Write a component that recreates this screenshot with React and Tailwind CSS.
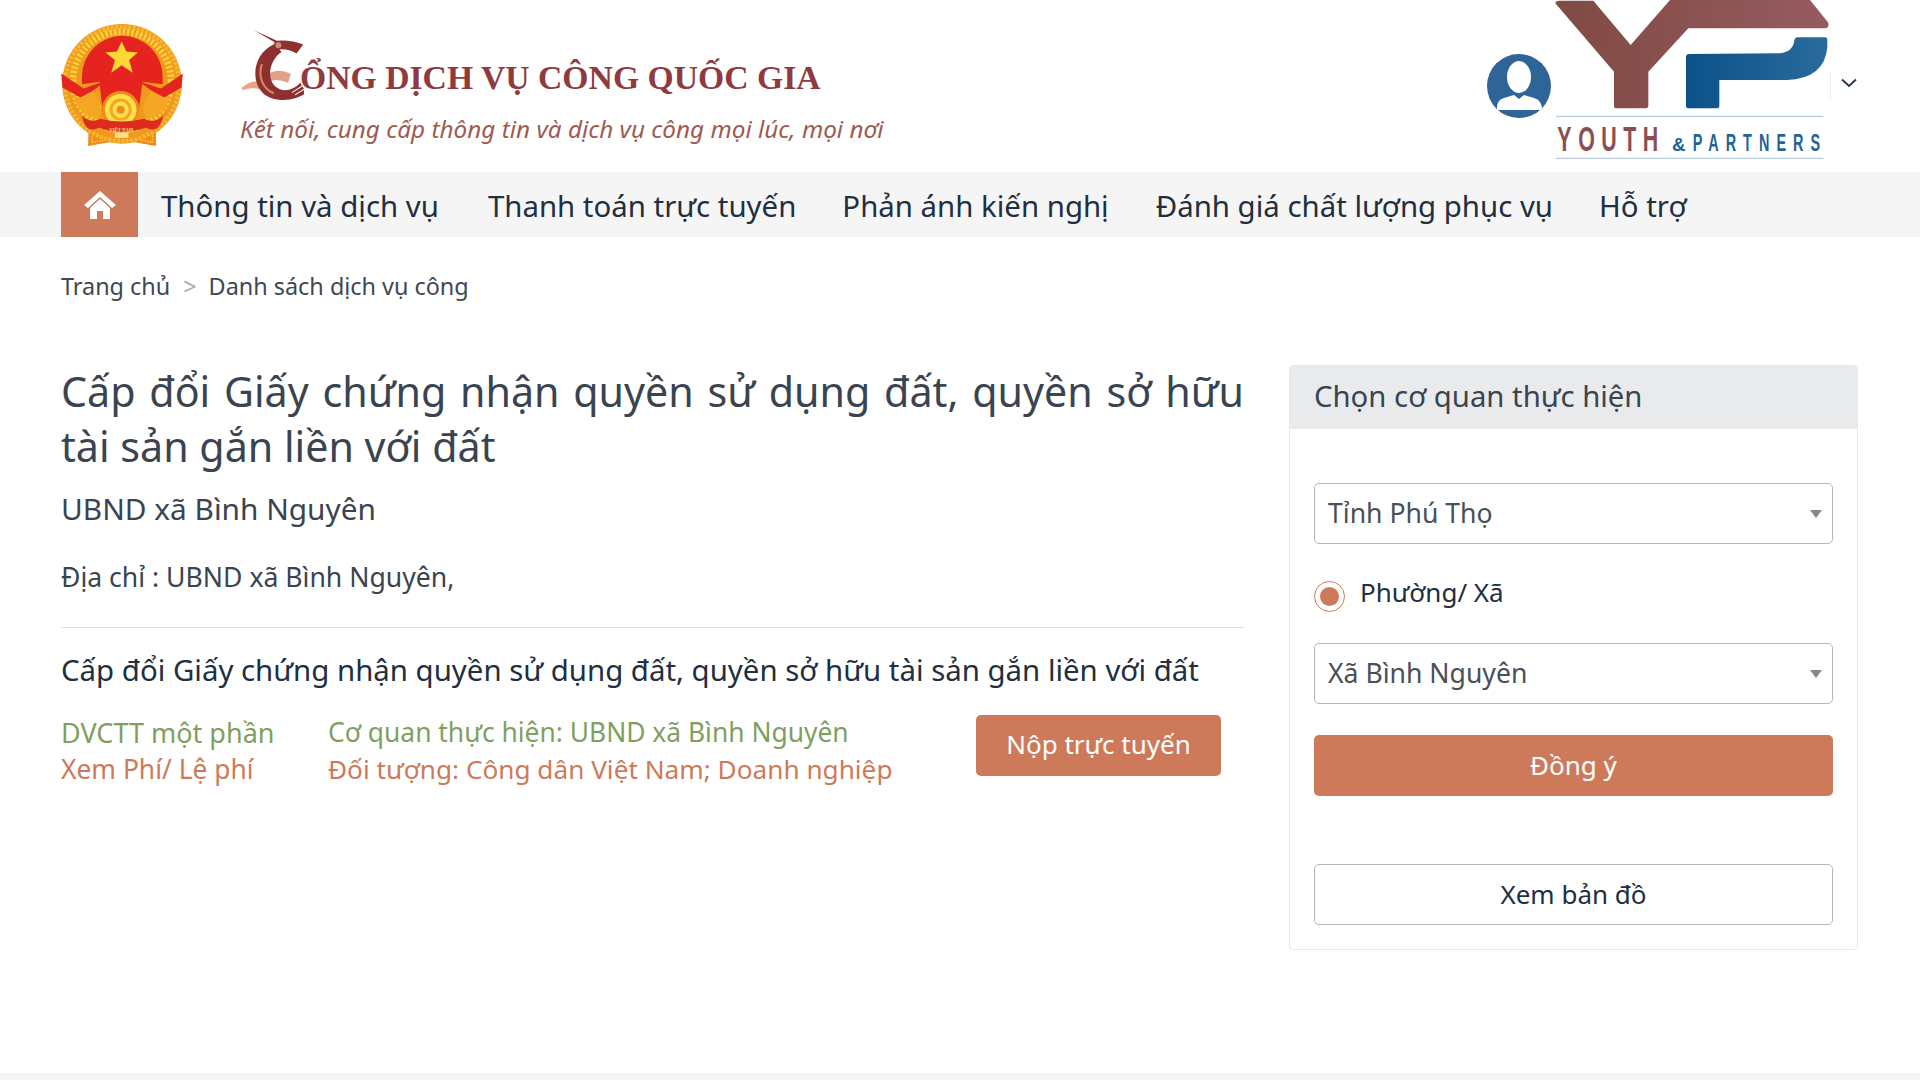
const Emblem = () => (
    <svg viewBox="68 40 362 372" className="w-[122px] h-[125px]">
        <path d="M150 345 L350 345 L350 406 L250 388 L148 406 Z" fill="#f08a1d" />
        <path d="M160 355 L340 355 L340 395 L250 380 L160 395 Z" fill="none" stroke="#ffd23c" strokeWidth="5" strokeDasharray="4 4" />
        <circle cx="249" cy="221" r="178" fill="#ef9a1e" />
        <circle cx="249" cy="221" r="170" fill="none" stroke="#f7b733" strokeWidth="12" strokeDasharray="8 5" />
        <circle cx="249" cy="212" r="146" fill="none" stroke="#ffd23c" strokeWidth="20" strokeDasharray="7 6" />
        <path d="M130 200 A120 122 0 0 1 370 200 L370 222 L310 215 L300 290 L190 290 L182 215 L130 222 Z" fill="#e5231f" />
        <polygon points="248,95 262,125 296,128 270,150 281,188 248,166 217,188 228,150 200,128 234,125" fill="#fdd835" />
        <path d="M68 190 L135 235 L200 212 L165 240 L125 262 L72 232 Z" fill="#e5231f" />
        <path d="M430 190 L365 235 L295 212 L335 240 L375 262 L426 232 Z" fill="#e5231f" />
        <path d="M105 262 L125 262 Q155 250 165 240 L190 290 L180 325 Q125 320 105 262 Z" fill="#f5a623" />
        <path d="M393 262 L375 262 Q345 250 335 240 L310 290 L320 325 Q375 320 393 262 Z" fill="#f5a623" />
        <circle cx="245" cy="298" r="56" fill="#f08a1d" />
        <circle cx="245" cy="298" r="47" fill="#ffe14d" />
        <circle cx="245" cy="298" r="33" fill="#f5a623" />
        <circle cx="245" cy="298" r="24" fill="#ffe14d" />
        <circle cx="245" cy="298" r="12" fill="#f08a1d" />
        <path d="M130 315 Q155 340 185 325 Q245 342 315 325 Q345 340 372 315 Q360 372 320 352 Q245 375 180 352 Q140 372 130 315 Z" fill="#df2a1f" />
        <text x="247" y="361" textAnchor="middle" fontFamily="Liberation Serif, serif" fontSize="14" fontWeight="700" fill="#fbe089">VIỆT NAM</text>
        <rect x="228" y="366" width="40" height="16" fill="#fbe089" />
    </svg>
);

const BirdLogo = () => (
    <svg viewBox="30 25 170 190" className="w-[64px] h-[72px]">
        <path d="M34 184 Q60 158 100 168 L98 192 Q62 178 38 190 Z" fill="#e8a58a" />
        <path d="M98 150 Q130 128 165 146 L158 170 Q125 155 100 170 Z" fill="#e0a08a" />
        <path d="M124 66 C55 92 55 192 112 210 C150 222 185 212 206 196 L190 170 C170 192 142 196 124 180 C100 158 108 110 140 88 Z" fill="#8f3030" />
        <path d="M88 120 C78 150 88 185 120 198" fill="none" stroke="#d77f5f" strokeWidth="6" />
        <path d="M66 30 L128 58 Q165 55 198 68 L180 92 Q155 78 130 82 L118 72 L122 62 Z" fill="#8f3030" />
        <circle cx="132" cy="70" r="8" fill="#c98b74" />
        <path d="M160 186 L186 170 M168 196 L196 178 M176 202 L202 186" stroke="#f5f5f5" strokeWidth="3" />
    </svg>
);

const YpLogo = () => (
    <svg viewBox="345 0 825 480" className="w-[275px] h-[160px]">
        <defs>
            <linearGradient id="ypBrown">
                <stop offset="0" stopColor="#7f4a43" />
                <stop offset="1" stopColor="#965b61" />
            </linearGradient>
            <linearGradient id="ypBlue">
                <stop offset="0" stopColor="#0b5189" />
                <stop offset="1" stopColor="#2a6b9c" />
            </linearGradient>
        </defs>
        <path d="M346 10 Q347 2 358 2 L460 2 L572 135 L690 0 L1110 0 L1165 68 Q1168 85 1155 85 L745 85 L625 215 L625 318 Q624 325 615 325 L530 325 Q522 325 522 318 L522 215 Z" fill="url(#ypBrown)" />
        <path d="M738 172 Q738 162 748 162 L1020 160 Q1060 155 1063 120 Q1065 112 1072 112 L1155 112 Q1162 112 1162 120 L1162 140 Q1155 235 1040 240 L838 240 L838 318 Q838 325 830 325 L745 325 Q738 325 738 318 Z" fill="url(#ypBlue)" />
        <line x1="348" y1="349" x2="1150" y2="349" stroke="#a9c0d4" strokeWidth="3" />
        <line x1="348" y1="475" x2="1150" y2="475" stroke="#a9c0d4" strokeWidth="3" />
        <text transform="translate(352 452) scale(0.6 1)" fontFamily="Liberation Sans, sans-serif" fontWeight="700" fontSize="107" textLength="505" lengthAdjust="spacing" fill="#8a4f52">YOUTH</text>
        <text x="696" y="452" fontFamily="Liberation Sans, sans-serif" fontWeight="700" fontSize="56" fill="#1f6398">&amp;</text>
        <text transform="translate(758 452) scale(0.6 1)" fontFamily="Liberation Sans, sans-serif" fontWeight="700" fontSize="72" textLength="637" lengthAdjust="spacing" fill="#1f6398">PARTNERS</text>
    </svg>
);

const Avatar = () => (
    <svg viewBox="0 0 64 64" className="w-[64px] h-[64px]">
        <circle cx="32" cy="32" r="32" fill="#2f6499" />
        <ellipse cx="32" cy="23" rx="12" ry="16" fill="#fff" />
        <path d="M10 56 Q9 46 17 44 L27 41 L32 45 L37 41 L47 44 Q55 46 55 56 Z" fill="#fff" />
    </svg>
);

const SelectBox = ({ value }) => (
    <div className="h-[61px] border border-[#b5b5b5] rounded-[5px] flex items-center justify-between pl-[13px] pr-[10px] text-[26.6px] text-[#495057]">
        <span>{value}</span>
        <span className="w-0 h-0 border-x-[6px] border-x-transparent border-t-[8px] border-t-[#888]"></span>
    </div>
);

const menu = [
    { label: 'Thông tin và dịch vụ', gap: 'mr-[49px]' },
    { label: 'Thanh toán trực tuyến', gap: 'mr-[46px]' },
    { label: 'Phản ánh kiến nghị', gap: 'mr-[47px]' },
    { label: 'Đánh giá chất lượng phục vụ', gap: 'mr-[46px]' },
    { label: 'Hỗ trợ', gap: '' },
];

export default function App() {
    return (
        <div className="w-[1920px] h-[1080px] bg-white flex flex-col overflow-hidden font-['Noto_Sans',sans-serif] text-[#212f3f]">
            <header className="h-[172px] flex items-start pl-[61px] pr-[63px]">
                <div className="mt-[23px]"><Emblem /></div>
                <div className="ml-[57px] mt-[28px]">
                    <div className="flex items-end">
                        <BirdLogo />
                        <span className="font-['Liberation_Serif',serif] font-bold text-[33.7px] leading-[40px] text-[#8f3a3f] ml-[-4px] mb-[2px]">ỔNG DỊCH VỤ CÔNG QUỐC GIA</span>
                    </div>
                    <div className="italic text-[24.3px] leading-[30px] text-[#a05a4f] mt-[14px]">Kết nối, cung cấp thông tin và dịch vụ công mọi lúc, mọi nơi</div>
                </div>
                <div className="ml-auto flex items-start">
                    <div className="mt-[54px] mr-[4px]"><Avatar /></div>
                    <YpLogo />
                    <div className="mt-[72px] h-[28px] border-l border-[#eee] pl-[10px] pt-[6px]">
                        <svg viewBox="0 0 16 10" className="w-[16px] h-[10px]">
                            <path d="M1 1.5 L8 8 L15 1.5" fill="none" stroke="#2f3b48" strokeWidth="2" />
                        </svg>
                    </div>
                </div>
            </header>

            <nav className="h-[65px] bg-[#f5f5f5] flex items-center pl-[61px]">
                <div className="w-[77px] h-[65px] bg-[#cd7a5a] flex items-center justify-center mr-[23px]">
                    <svg viewBox="0 0 32 28" className="w-[32px] h-[28px]">
                        <path d="M16 0 L32 14 L28 17 L16 6 L4 17 L0 14 Z" fill="#fff" />
                        <path d="M6 17 L16 8 L26 17 L26 28 L19 28 L19 20 L13 20 L13 28 L6 28 Z" fill="#fff" />
                    </svg>
                </div>
                {menu.map((item) => (
                    <span key={item.label} className={`text-[29.4px] pt-[3px] whitespace-nowrap ${item.gap}`}>{item.label}</span>
                ))}
            </nav>

            <div className="flex items-center pl-[61px] mt-[33px] text-[23.4px] leading-[32px] text-[#3d4853]">
                <span>Trang chủ</span>
                <span className="ml-[13px] mr-[12px] text-[#aaa]">&gt;</span>
                <span>Danh sách dịch vụ công</span>
            </div>

            <main className="flex-1 flex items-start pl-[61px] pr-[62px] mt-[63px]">
                <div className="w-[1183px]">
                    <h1 className="text-[41.2px] leading-[55px] text-[#3a4450] text-justify -mt-[1px]">Cấp đổi Giấy chứng nhận quyền sử dụng đất, quyền sở hữu tài sản gắn liền với đất</h1>
                    <div className="text-[29.8px] leading-[40px] text-[#3a4450] mt-[15px]">UBND xã Bình Nguyên</div>
                    <div className="text-[26.6px] leading-[34px] text-[#3a4450] mt-[31px]">Địa chỉ : UBND xã Bình Nguyên,</div>
                    <div className="border-t border-[#dfdfdf] mt-[33px]"></div>
                    <div className="text-[29.4px] leading-[40px] mt-[22px]">Cấp đổi Giấy chứng nhận quyền sử dụng đất, quyền sở hữu tài sản gắn liền với đất</div>
                    <div className="flex items-start mt-[25px] leading-[37px]">
                        <div className="w-[267px] -mt-[1px]">
                            <div className="text-[27px] text-[#7f9f5f]">DVCTT một phần</div>
                            <div className="text-[26.4px] text-[#cd7a5a]">Xem Phí/ Lệ phí</div>
                        </div>
                        <div className="w-[648px] -mt-[1px]">
                            <div className="text-[26.4px] text-[#7f9f5f]">Cơ quan thực hiện: UBND xã Bình Nguyên</div>
                            <div className="text-[26.2px] text-[#cd7a5a]">Đối tượng: Công dân Việt Nam; Doanh nghiệp</div>
                        </div>
                        <button className="w-[245px] h-[61px] rounded-[5px] bg-[#cd7a5a] text-white text-[26px] pb-[2px]">Nộp trực tuyến</button>
                    </div>
                </div>
                <aside className="w-[569px] ml-[45px] border border-[#e6e8ea] rounded-[4px] overflow-hidden">
                    <div className="h-[63px] bg-[#e9eaec] flex items-center pl-[24px] pb-[2px] text-[29.3px] text-[#3a4450]">Chọn cơ quan thực hiện</div>
                    <div className="px-[24px] pt-[54px] pb-[24px]">
                        <SelectBox value="Tỉnh Phú Thọ" />
                        <div className="flex items-center mt-[30px] text-[26px] h-[40px]">
                            <span className="w-[31px] h-[31px] rounded-full border border-[#cd7a5a] flex items-center justify-center mt-[4px]">
                                <span className="w-[19px] h-[19px] rounded-full bg-[#cd7a5a]"></span>
                            </span>
                            <span className="ml-[15px] -mt-[3px]">Phường/ Xã</span>
                        </div>
                        <div className="mt-[29px]"><SelectBox value="Xã Bình Nguyên" /></div>
                        <button className="w-full h-[61px] rounded-[5px] bg-[#cd7a5a] text-white text-[26px] mt-[31px]">Đồng ý</button>
                        <button className="w-full h-[61px] rounded-[5px] border border-[#b5b5b5] bg-white text-[26px] mt-[68px]">Xem bản đồ</button>
                    </div>
                </aside>
            </main>

            <footer className="h-[7px] bg-[#f5f5f5]"></footer>
        </div>
    );
}
